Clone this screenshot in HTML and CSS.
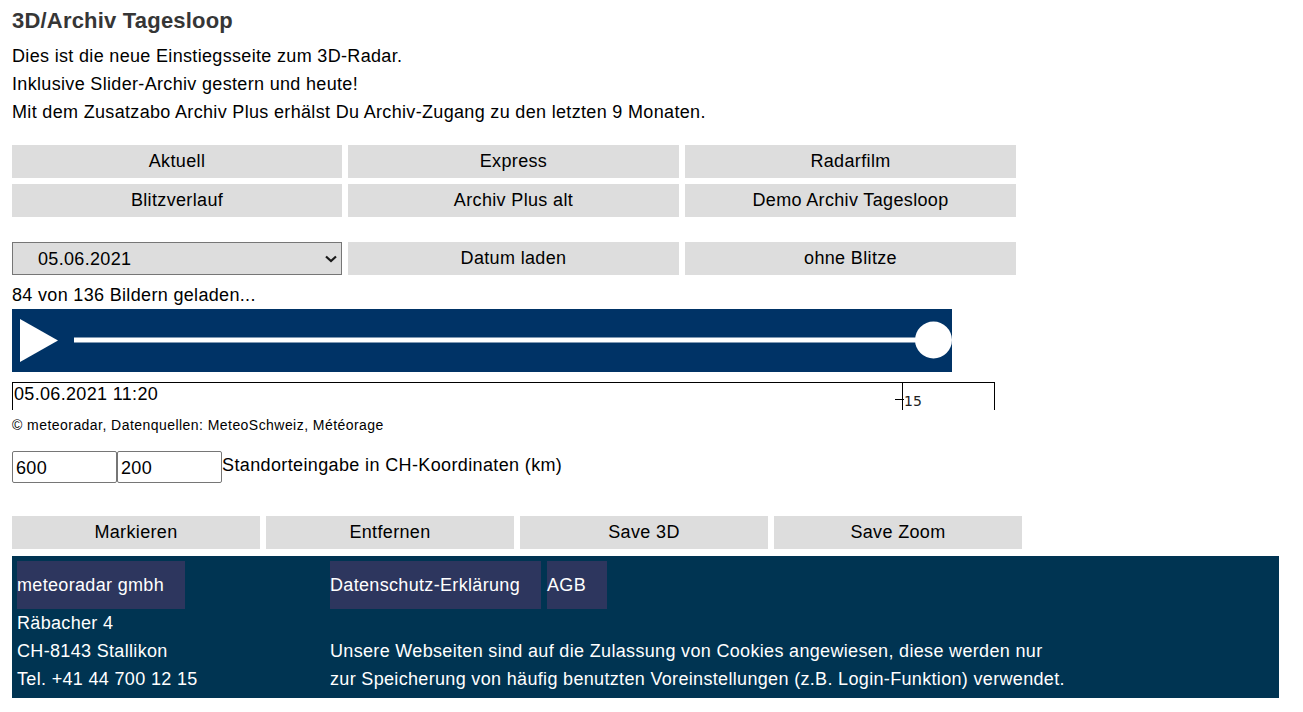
FILE: index.html
```html
<!DOCTYPE html>
<html lang="de">
<head>
<meta charset="utf-8">
<title>3D/Archiv Tagesloop</title>
<link rel="stylesheet" href="styles.css">
</head>
<body>
<div class="page">
  <h1 class="title">3D/Archiv Tagesloop</h1>
  <div class="intro">
    <div>Dies ist die neue Einstiegsseite zum 3D-Radar.</div>
    <div>Inklusive Slider-Archiv gestern und heute!</div>
    <div>Mit dem Zusatzabo Archiv Plus erhälst Du Archiv-Zugang zu den letzten 9 Monaten.</div>
  </div>

  <div class="nav">
    <button class="btn">Aktuell</button>
    <button class="btn">Express</button>
    <button class="btn">Radarfilm</button>
    <button class="btn">Blitzverlauf</button>
    <button class="btn">Archiv Plus alt</button>
    <button class="btn">Demo Archiv Tagesloop</button>
  </div>

  <div class="nav daterow">
    <div class="selwrap">
      <select class="datesel"><option>05.06.2021</option></select>
      <svg class="chevron" width="12" height="8" viewBox="0 0 12 8">
        <polyline points="1,1.5 6,6 11,1.5" fill="none" stroke="#1a1a1a" stroke-width="2.2"/>
      </svg>
    </div>
    <button class="btn">Datum laden</button>
    <button class="btn">ohne Blitze</button>
  </div>

  <div class="status">84 von 136 Bildern geladen...</div>

  <div class="slider">
    <svg width="940" height="63" viewBox="0 0 940 63">
      <polygon points="8,10 46,31.5 8,53" fill="#ffffff"/>
      <rect x="62" y="28.5" width="862" height="5" fill="#ffffff"/>
      <circle cx="921.5" cy="31" r="18.5" fill="#ffffff"/>
    </svg>
  </div>

  <div class="chart">
    <span class="chart-time">05.06.2021 11:20</span>
    <svg class="chart-axis" width="40" height="28" viewBox="0 0 40 28">
      <line x1="10.5" y1="0" x2="10.5" y2="28" stroke="#000" stroke-width="1"/>
      <line x1="3" y1="17.5" x2="12" y2="17.5" stroke="#000" stroke-width="1"/>
      <text x="12" y="23.5" class="axis-label">15</text>
    </svg>
  </div>

  <div class="credit">© meteoradar, Datenquellen: MeteoSchweiz, Météorage</div>

  <div class="coords">
    <input class="coord" type="text" value="600">
    <input class="coord" type="text" value="200">
    <span class="coord-label">Standorteingabe in CH-Koordinaten (km)</span>
  </div>

  <div class="tools">
    <button class="btn">Markieren</button>
    <button class="btn">Entfernen</button>
    <button class="btn">Save 3D</button>
    <button class="btn">Save Zoom</button>
  </div>

  <footer class="footer">
    <div class="fcol">
      <div class="flinks"><span class="flink">meteoradar gmbh</span></div>
      <div class="fline">Räbacher 4</div>
      <div class="fline">CH-8143 Stallikon</div>
      <div class="fline">Tel. +41 44 700 12 15</div>
    </div>
    <div class="fcol">
      <div class="flinks"><span class="flink">Datenschutz-Erklärung</span><span class="flink">AGB</span></div>
      <div class="fline">&nbsp;</div>
      <div class="fline">Unsere Webseiten sind auf die Zulassung von Cookies angewiesen, diese werden nur</div>
      <div class="fline">zur Speicherung von häufig benutzten Voreinstellungen (z.B. Login-Funktion) verwendet.</div>
    </div>
  </footer>
</div>
</body>
</html>
```

FILE: styles.css
```css
html, body {
  margin: 0;
  padding: 0;
  background: #ffffff;
}

body {
  font-family: "Liberation Sans", Arial, sans-serif;
  font-size: 18px;
  letter-spacing: 0.33px;
  color: #000000;
}

.page {
  padding: 8px 12px 0 12px;
}

.title {
  margin: 0;
  font-size: 22px;
  line-height: 26px;
  font-weight: bold;
  letter-spacing: 0.2px;
  color: #363636;
}

.intro {
  margin-top: 8px;
  line-height: 28px;
}

.nav {
  margin-top: 19px;
  width: 1004px;
  display: grid;
  grid-template-columns: 330px 331px 331px;
  grid-auto-rows: 33px;
  column-gap: 6px;
  row-gap: 6px;
}

.btn {
  margin: 0;
  border: none;
  background: #dddddd;
  font-family: "Liberation Sans", Arial, sans-serif;
  font-size: 18px;
  letter-spacing: 0.35px;
  color: #000000;
  padding: 0;
  height: 33px;
}

.daterow {
  margin-top: 25px;
}

.selwrap {
  position: relative;
  height: 33px;
}

.datesel {
  -webkit-appearance: none;
  appearance: none;
  display: block;
  box-sizing: border-box;
  width: 330px;
  margin: 0;
  height: 33px;
  border: 1px solid #767676;
  background-color: #dddddd;
  font-family: "Liberation Sans", Arial, sans-serif;
  font-size: 18px;
  letter-spacing: 0.33px;
  color: #000000;
  padding: 0 0 0 25px;
  border-radius: 0;
}

.chevron {
  position: absolute;
  left: 313px;
  top: 13px;
  pointer-events: none;
}

.status {
  margin-top: 7px;
  line-height: 27px;
  height: 27px;
}

.slider {
  width: 940px;
  height: 63px;
  background: #003366;
}

.slider svg {
  display: block;
}

.chart {
  position: relative;
  margin-top: 10px;
  width: 981px;
  height: 27px;
  border: 1px solid #000000;
  border-bottom: none;
  line-height: 20px;
}

.chart-time {
  display: block;
  padding-left: 1px;
  padding-top: 1px;
}

.chart-axis {
  position: absolute;
  left: 879px;
  top: -1px;
}

.axis-label {
  font-family: "DejaVu Sans", sans-serif;
  font-size: 14px;
  letter-spacing: 0;
  fill: #222222;
}

.credit {
  margin-top: 7px;
  font-size: 14px;
  letter-spacing: 0.45px;
  line-height: 16px;
  height: 16px;
}

.coords {
  margin-top: 18px;
  display: flex;
  align-items: flex-start;
  height: 32px;
}

.coord {
  box-sizing: border-box;
  width: 105px;
  height: 32px;
  margin: 0;
  border: 1px solid #767676;
  border-radius: 2px;
  padding: 2px 3px 0 3px;
  font-family: "Liberation Sans", Arial, sans-serif;
  font-size: 18px;
  letter-spacing: 0.33px;
  color: #000000;
}

.coord-label {
  line-height: 28px;
  letter-spacing: 0.37px;
}

.tools {
  margin-top: 33px;
  width: 1010px;
  display: grid;
  grid-template-columns: repeat(4, 1fr);
  column-gap: 6px;
}

.footer {
  margin-top: 7px;
  width: 1257px;
  padding: 5px;
  background: #003452;
  color: #ffffff;
  display: grid;
  grid-template-columns: 313px 1fr;
}

.flinks {
  display: flex;
  gap: 6px;
  height: 48px;
}

.flink {
  display: block;
  background: #2d365e;
  line-height: 48px;
  padding-right: 21px;
}

.fline {
  line-height: 28px;
  height: 28px;
}
```
